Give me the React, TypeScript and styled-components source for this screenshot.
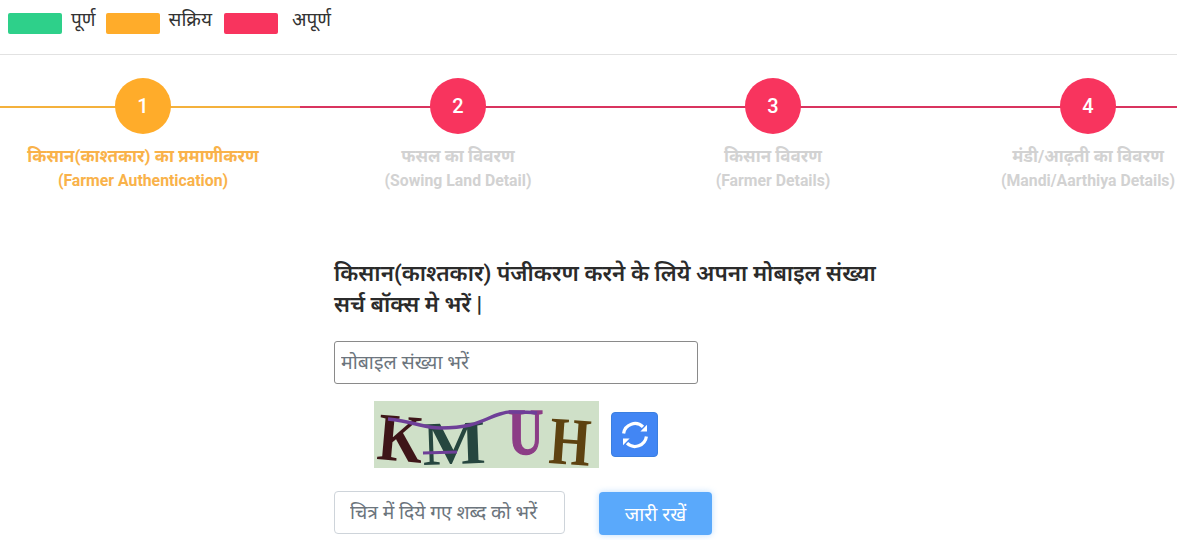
import React from 'react'
import styled, { createGlobalStyle } from 'styled-components'

const GlobalStyle = createGlobalStyle`
  html, body {
    margin: 0;
    padding: 0;
    background: #fff;
    overflow: hidden;
    font-family: Roboto, "Noto Sans", "Noto Sans Devanagari", sans-serif;
  }
`

const colors = {
  done: '#2ed08a',
  active: '#ffac2a',
  pending: '#f8345e',
}

const legend = [
  { label: 'पूर्ण', color: colors.done, gap: 9, after: 10 },
  { label: 'सक्रिय', color: colors.active, gap: 9, after: 12 },
  { label: 'अपूर्ण', color: colors.pending, gap: 14, after: 0 },
]

const steps = [
  { num: 1, hi: 'किसान(काश्तकार) का प्रमाणीकरण', en: '(Farmer Authentication)', active: true },
  { num: 2, hi: 'फसल का विवरण', en: '(Sowing Land Detail)', active: false },
  { num: 3, hi: 'किसान विवरण', en: '(Farmer Details)', active: false },
  { num: 4, hi: 'मंडी/आढ़ती का विवरण', en: '(Mandi/Aarthiya Details)', active: false },
]

export default function App() {
  return (
    <Page>
      <GlobalStyle />
      <Legend>
        {legend.map((item) => (
          <LegendItem key={item.label} $after={item.after} $gap={item.gap}>
            <Swatch $color={item.color} />
            <LegendLabel>{item.label}</LegendLabel>
          </LegendItem>
        ))}
      </Legend>
      <Stepper>
        {steps.map((step) => (
          <Step key={step.num} $active={step.active}>
            <Circle $active={step.active}>{step.num}</Circle>
            <StepTitle $active={step.active}>{step.hi}</StepTitle>
            <StepSub $active={step.active}>{step.en}</StepSub>
          </Step>
        ))}
      </Stepper>
      <Form>
        <Heading>
          किसान(काश्तकार) पंजीकरण करने के लिये अपना मोबाइल संख्या
          <br />
          सर्च बॉक्स मे भरें |
        </Heading>
        <MobileInput placeholder="मोबाइल संख्या भरें" />
        <CaptchaRow>
          <Captcha />
          <RefreshButton aria-label="refresh">
            <svg width="30" height="30" viewBox="0 0 30 30" fill="none">
              <path d="M3.6 13.4A11.5 11.5 0 0 1 23 6.8" stroke="#fff" strokeWidth="3.2" />
              <path d="M26.4 16.6A11.5 11.5 0 0 1 7 23.2" stroke="#fff" strokeWidth="3.2" />
              <path d="M27 4.8v6.6h-6.6z" fill="#fff" />
              <path d="M3 25.2v-6.6h6.6z" fill="#fff" />
            </svg>
          </RefreshButton>
        </CaptchaRow>
        <SubmitRow>
          <CaptchaInput placeholder="चित्र में दिये गए शब्द को भरें" />
          <SubmitButton>जारी रखें</SubmitButton>
        </SubmitRow>
      </Form>
    </Page>
  )
}

function Captcha() {
  return (
    <CaptchaImage width="225" height="67" viewBox="0 0 225 67">
      <rect width="225" height="67" fill="#cfe0c8" />
      <CaptchaLetter fontSize="68" fill="#3e1518" transform="translate(2 58) rotate(5) scale(0.86 1)">K</CaptchaLetter>
      <CaptchaLetter fontSize="62" fill="#26463f" transform="translate(49 64) rotate(-2) scale(1.08 1)">M</CaptchaLetter>
      <CaptchaLetter
        fontSize="66"
        fill="#8c3d86"
        stroke="#8c3d86"
        strokeWidth="1.4"
        transform="translate(134 53) scale(0.74 1)"
      >
        U
      </CaptchaLetter>
      <CaptchaLetter fontSize="68" fill="#5d4210" transform="translate(174 62) rotate(4) scale(0.78 1)">H</CaptchaLetter>
      <path
        d="M14 18C26 19 38 22 46 24S58 27 66 27 84 27 96 24 116 16 126 13 134 11 139 11 155 11 163 12"
        stroke="#6e3f98"
        strokeWidth="3.4"
        fill="none"
      />
      <path d="M49 52L83 51" stroke="#6e3f98" strokeWidth="3" fill="none" />
    </CaptchaImage>
  )
}

const Page = styled.div`
  width: 1177px;
  height: 540px;
  overflow: hidden;
  color: #212529;
`

const Legend = styled.div`
  display: flex;
  align-items: flex-start;
  height: 49px;
  padding: 5px 0 0 8px;
  border-bottom: 1px solid #e2e2e2;
`

const LegendItem = styled.div<{ $after: number; $gap: number }>`
  display: flex;
  gap: ${(p) => p.$gap}px;
  margin-right: ${(p) => p.$after}px;
`

const Swatch = styled.span<{ $color: string }>`
  width: 54px;
  height: 21px;
  margin-top: 8px;
  border-radius: 2px;
  background: ${(p) => p.$color};
`

const LegendLabel = styled.span`
  font-size: 19px;
  line-height: 30px;
  color: #333;
`

const Stepper = styled.div`
  display: grid;
  grid-template-columns: repeat(4, 315px);
  width: 1260px;
  margin: 23px 0 0 -15px;
`

const Step = styled.div<{ $active: boolean }>`
  position: relative;
  display: flex;
  flex-direction: column;
  align-items: center;
  padding-left: 1px;
  text-align: center;

  &::before {
    content: '';
    position: absolute;
    left: 0;
    right: 0;
    top: 28px;
    height: 2px;
    background: ${(p) => (p.$active ? '#f4b13c' : '#d9345f')};
  }
`

const Circle = styled.div<{ $active: boolean }>`
  position: relative;
  width: 56px;
  height: 56px;
  border-radius: 50%;
  display: flex;
  align-items: center;
  justify-content: center;
  color: #fff;
  font-size: 20px;
  font-weight: 500;
  background: ${(p) => (p.$active ? colors.active : colors.pending)};
`

const StepTitle = styled.div<{ $active: boolean }>`
  margin-top: 10px;
  font-size: 17px;
  line-height: 24px;
  font-weight: 700;
  white-space: nowrap;
  color: ${(p) => (p.$active ? '#f9b24a' : '#d2d2d2')};
`

const StepSub = styled(StepTitle)`
  margin-top: 0;
  font-size: 15.8px;
  line-height: 25px;
`

const Form = styled.div`
  display: flex;
  flex-direction: column;
  align-items: flex-start;
  margin: 65px 0 0 334px;
  width: 600px;
`

const Heading = styled.h2`
  margin: 0;
  font-size: 22.4px;
  line-height: 31px;
  font-weight: 600;
  white-space: nowrap;
  color: #2b2b2b;
`

const MobileInput = styled.input`
  width: 364px;
  height: 43px;
  margin-top: 21px;
  padding: 0 6px;
  box-sizing: border-box;
  border: 1px solid #8a8a8a;
  border-radius: 3px;
  font-size: 19.5px;
  font-family: inherit;
  outline: none;

  &::placeholder {
    color: #6c757d;
    opacity: 1;
  }
`

const CaptchaRow = styled.div`
  display: flex;
  align-items: center;
  gap: 12px;
  margin: 17px 0 0 40px;
`

const CaptchaImage = styled.svg`
  display: block;
  overflow: visible;
`

const CaptchaLetter = styled.text`
  font-family: 'Liberation Serif', serif;
  font-weight: 700;
`

const RefreshButton = styled.button`
  display: flex;
  align-items: center;
  justify-content: center;
  width: 47px;
  height: 45px;
  padding: 0;
  border: 1px solid #3b7fe0;
  border-radius: 4px;
  background: #4286f4;
`

const SubmitRow = styled.div`
  display: flex;
  align-items: flex-start;
  gap: 34px;
  margin-top: 23px;
`

const CaptchaInput = styled.input`
  width: 231px;
  height: 43px;
  padding: 0 15px;
  box-sizing: border-box;
  border: 1px solid #ced4da;
  border-radius: 4px;
  font-size: 19.3px;
  font-family: inherit;
  outline: none;

  &::placeholder {
    color: #6c757d;
    opacity: 1;
  }
`

const SubmitButton = styled.button`
  width: 113px;
  height: 43px;
  margin-top: 1px;
  border: none;
  border-radius: 4px;
  background: #5aa9fb;
  color: #fff;
  font-size: 19.5px;
  font-family: inherit;
  box-shadow: 0 0 6px rgba(90, 169, 251, 0.4);
`
